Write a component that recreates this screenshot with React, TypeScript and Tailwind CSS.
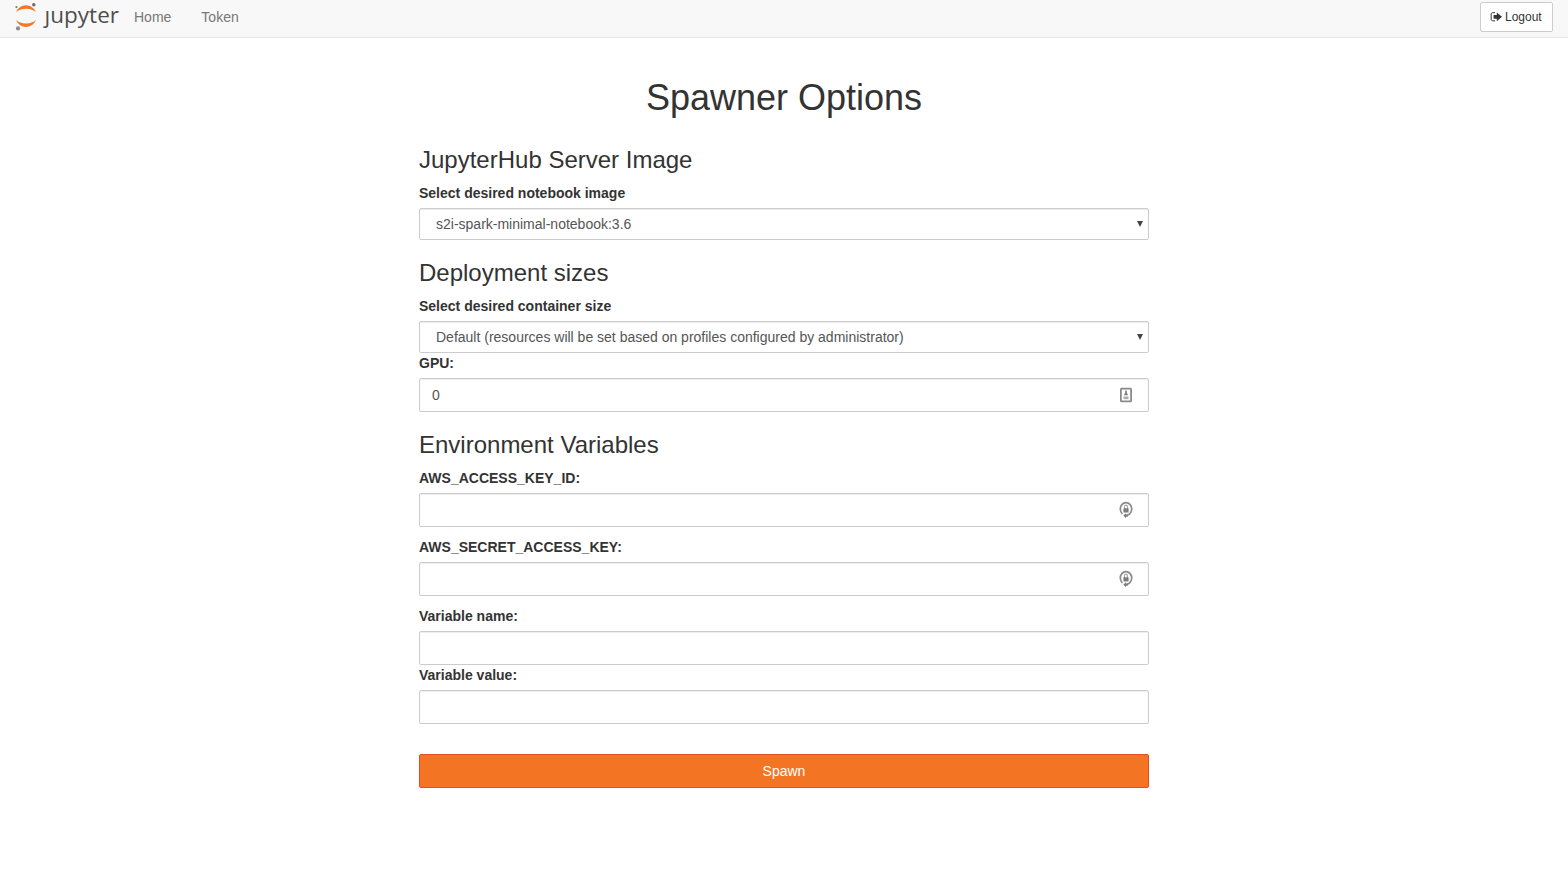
import React from 'react';

const fieldBox =
  'flex w-full items-center rounded-[2px] border border-[#cccccc] bg-white text-[14px] leading-5 text-[#555555] shadow-[inset_0_1px_1px_rgba(0,0,0,0.075)]';

function JupyterLogo() {
  return (
    <svg width="105" height="34" viewBox="0 0 105 34" role="img" className="block overflow-visible">
      <path d="M1.1 12.2C2.7 8.1 6.5 5.3 11 5.3S19.3 8.1 20.9 12.2C18.8 10 15.2 8.7 11 8.7S3.2 10 1.1 12.2Z" fill="#f37726" />
      <path d="M1.1 20.1C2.7 24.2 6.5 27 11 27s8.3-2.8 9.9-6.9C18.8 22.3 15.2 23.6 11 23.6S3.2 22.3 1.1 20.1Z" fill="#f37726" />
      <circle cx="18.8" cy="4.8" r="1.7" fill="#6b6b6b" />
      <circle cx="1.4" cy="7" r="1.1" fill="#767677" />
      <circle cx="3" cy="28.4" r="2.1" fill="#8c8c8c" />
      <text
        x="29.5"
        y="22.5"
        fontFamily="'Open Sans', 'Noto Sans', sans-serif"
        fontSize="22.5"
        textLength="74.5"
        lengthAdjust="spacing"
        fill="#4e4e4e"
      >
        ȷupyter
      </text>
    </svg>
  );
}

function LogoutIcon() {
  return (
    <svg width="12" height="10" viewBox="0 0 12 10" className="mr-[3px] shrink-0">
      <path d="M5 0.7H2.7C1.8 .7 1.2 1.3 1.2 2.2v5.1c0 .9.6 1.5 1.5 1.5H5" fill="none" stroke="#333" strokeWidth="1" />
      <path d="M3.6 2.9h3.2V.4L12 4.8 6.8 9.200V6.700H3.600Z" fill="#333" />
    </svg>
  );
}

function ContactIcon() {
  return (
    <svg width="14" height="16" viewBox="0 0 14 16" className="shrink-0">
      <rect x="1.9" y="1.6" width="10.2" height="12.8" rx=".7" fill="white" stroke="#8a8a8a" strokeWidth="1.8" />
      <path d="M6.2 3.6h1.6v2l1.3 2.6H4.9l1.3-2.6Z" fill="#808080" />
      <path d="M4.5 9.5h5v2.7h-5Z" fill="#ababab" />
    </svg>
  );
}

function LockIcon() {
  return (
    <svg width="14" height="18" viewBox="0 0 14 18" className="shrink-0">
      <path d="M3.5 13A5.7 6.4 0 1 1 10.500 13L8 14.500" fill="none" stroke="#8b8b8b" strokeWidth="1.7" />
      <path d="M5.5 8V6a1.5 1.9 0 0 1 3 0V8" fill="none" stroke="#a5a5a5" strokeWidth="1.1" />
      <rect x="4.4" y="7.2" width="5.2" height="4.2" rx=".4" fill="#7c7c7c" />
      <path d="M4.3 14.5 7 12.2v1.200h1.800v2.300H7V17.200Z" fill="#7c7c7c" />
    </svg>
  );
}

function Heading({ children }: { children: React.ReactNode }) {
  return <h3 className="mt-5 mb-[10px] h-[26px] text-[24px] leading-[26px] font-normal">{children}</h3>;
}

function Label({ children }: { children: React.ReactNode }) {
  return <div className="mb-[5px] text-[14px] leading-5 font-bold">{children}</div>;
}

function Select({ value }: { value: string }) {
  return (
    <div className={`${fieldBox} h-8 justify-between pr-[5px] pl-4`}>
      <span>{value}</span>
      <svg width="6" height="6" viewBox="0 0 6 6" className="mb-px">
        <path d="M0 0h6L3 6Z" fill="#444" />
      </svg>
    </div>
  );
}

function Input({ value = '', icon }: { value?: string; icon?: React.ReactNode }) {
  return (
    <div className={`${fieldBox} h-[34px] pr-[15px] pl-3`}>
      <span className="flex-1">{value}</span>
      {icon}
    </div>
  );
}

export default function App() {
  return (
    <div className="min-h-[873px] bg-white font-['Liberation_Sans',Arial,sans-serif] text-[#333333]">
      <nav className="flex h-[38px] items-start border-b border-[#e7e7e7] bg-[#f8f8f8] pr-[15px] pl-[15px] text-[14px] leading-5 text-[#777777]">
        <JupyterLogo />
        <span className="pt-[7px] pl-[14px]">Home</span>
        <span className="pt-[7px] pl-[30px]">Token</span>
        <button className="mt-[2px] ml-auto flex h-[30px] w-[73px] items-center rounded-[2px] border border-[#cccccc] bg-white pl-[9px] text-[12px] leading-[18px] text-[#333333]">
          <LogoutIcon />
          Logout
        </button>
      </nav>
      <main className="mx-auto w-[730px] pt-10">
        <h1 className="mb-[29px] h-10 text-center text-[36px] leading-10">Spawner Options</h1>
        <Heading>JupyterHub Server Image</Heading>
        <Label>Select desired notebook image</Label>
        <Select value="s2i-spark-minimal-notebook:3.6" />
        <Heading>Deployment sizes</Heading>
        <Label>Select desired container size</Label>
        <Select value="Default (resources will be set based on profiles configured by administrator)" />
        <Label>GPU:</Label>
        <Input value="0" icon={<ContactIcon />} />
        <Heading>Environment Variables</Heading>
        <Label>AWS_ACCESS_KEY_ID:</Label>
        <Input icon={<LockIcon />} />
        <div className="mt-[10px]">
          <Label>AWS_SECRET_ACCESS_KEY:</Label>
          <Input icon={<LockIcon />} />
        </div>
        <div className="mt-[10px]">
          <Label>Variable name:</Label>
          <Input />
          <Label>Variable value:</Label>
          <Input />
        </div>
        <button className="mt-[30px] h-[34px] w-full rounded-[2px] border border-[#e34f21] bg-[#f37524] text-[14px] leading-5 text-white">
          Spawn
        </button>
      </main>
    </div>
  );
}
